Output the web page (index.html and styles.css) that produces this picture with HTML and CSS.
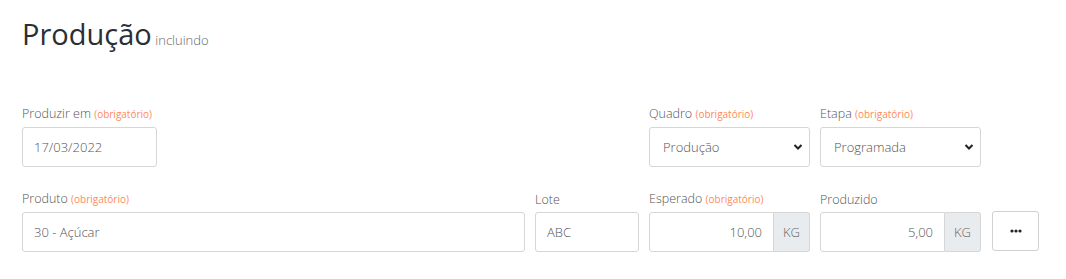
FILE: index.html
```html
<!DOCTYPE html>
<html lang="pt-BR">

<head>
    <meta charset="UTF-8">
    <title>Produção - incluindo</title>
    <link rel="stylesheet" href="styles.css">
</head>

<body>
    <div class="page">
        <h1 class="title">Produção <small>incluindo</small></h1>

        <div class="row row-top">
            <div class="field w-date">
                <label>Produzir em <span class="req">(obrigatório)</span></label>
                <input class="control" type="text" value="17/03/2022">
            </div>
            <div class="spacer"></div>
            <div class="field w-mid">
                <label>Quadro <span class="req">(obrigatório)</span></label>
                <div class="select">
                    <span>Produção</span>
                    <svg width="10" height="8" viewBox="0 0 10 8"><path d="M1.5 2 L5 5.5 L8.5 2" fill="none" stroke="#222" stroke-width="2"/></svg>
                </div>
            </div>
            <div class="field w-mid">
                <label>Etapa <span class="req">(obrigatório)</span></label>
                <div class="select">
                    <span>Programada</span>
                    <svg width="10" height="8" viewBox="0 0 10 8"><path d="M1.5 2 L5 5.5 L8.5 2" fill="none" stroke="#222" stroke-width="2"/></svg>
                </div>
            </div>
            <div class="w-btn"></div>
        </div>

        <div class="row">
            <div class="field w-grow">
                <label>Produto <span class="req">(obrigatório)</span></label>
                <input class="control" type="text" value="30 - Açúcar">
            </div>
            <div class="field w-lote">
                <label>Lote</label>
                <input class="control" type="text" value="ABC">
            </div>
            <div class="field w-mid">
                <label>Esperado <span class="req">(obrigatório)</span></label>
                <div class="group">
                    <input class="control num" type="text" value="10,00">
                    <span class="addon">KG</span>
                </div>
            </div>
            <div class="field w-mid">
                <label>Produzido</label>
                <div class="group">
                    <input class="control num" type="text" value="5,00">
                    <span class="addon">KG</span>
                </div>
            </div>
            <div class="w-btn">
                <button class="more" type="button" title="Mais">
                    <svg width="12" height="4" viewBox="0 0 12 4"><circle cx="2" cy="2" r="1.6" fill="#222"/><circle cx="6" cy="2" r="1.6" fill="#222"/><circle cx="10" cy="2" r="1.6" fill="#222"/></svg>
                </button>
            </div>
        </div>
    </div>
</body>

</html>
```

FILE: styles.css
```css
body {
    margin: 0;
    padding: 0;
    font-family: "Open Sans", Arial, sans-serif;
    background: #fff;
    color: #333;
}

.page {
    padding: 14px 27px 0 22px;
}

.title {
    margin: 0 0 45px;
    font-size: 29px;
    font-weight: 400;
    color: #2b2f33;
    line-height: 40px;
}

.title small {
    font-size: 13px;
    font-weight: 300;
    color: #666;
    margin-left: -4px;
}

.row {
    display: flex;
    gap: 10px;
    align-items: flex-end;
}

.row-top {
    margin-bottom: 23px;
}

.field label {
    display: block;
    font-size: 12.5px;
    font-weight: 300;
    color: #555;
    margin-bottom: 4px;
    line-height: 17px;
}

.req {
    font-size: 10px;
    font-weight: 400;
    color: #ff8a5c;
}

.w-date { width: 135px; }
.spacer { flex: 1; }
.w-grow { flex: 1; }
.w-lote { width: 104px; }
.w-mid { width: 161px; }
.w-btn { width: 47px; margin-left: 1px; }

.control {
    box-sizing: border-box;
    display: block;
    width: 100%;
    height: 40px;
    padding: 0 11px;
    border: 1px solid #d6d6d6;
    border-radius: 3px;
    font-family: inherit;
    font-size: 13px;
    font-weight: 300;
    color: #555;
    background: #fff;
    outline: none;
}

.select {
    box-sizing: border-box;
    height: 40px;
    padding: 0 6px 0 13px;
    border: 1px solid #d6d6d6;
    border-radius: 3px;
    font-size: 13px;
    font-weight: 300;
    color: #555;
    display: flex;
    align-items: center;
    justify-content: space-between;
}

.group {
    display: flex;
}

.group .control {
    flex: 1;
    min-width: 0;
    border-radius: 3px 0 0 3px;
}

.num {
    text-align: right;
}

.addon {
    box-sizing: border-box;
    width: 36px;
    height: 40px;
    display: flex;
    align-items: center;
    justify-content: center;
    background: #e9ecef;
    border: 1px solid #d6d6d6;
    border-left: 0;
    border-radius: 0 3px 3px 0;
    font-size: 13px;
    font-weight: 300;
    color: #666;
}

.more {
    box-sizing: border-box;
    width: 47px;
    height: 40px;
    margin-bottom: 1px;
    border: 1px solid #d0d0d0;
    border-radius: 3px;
    background: #fff;
    padding: 0;
    display: flex;
    align-items: center;
    justify-content: center;
}
```
